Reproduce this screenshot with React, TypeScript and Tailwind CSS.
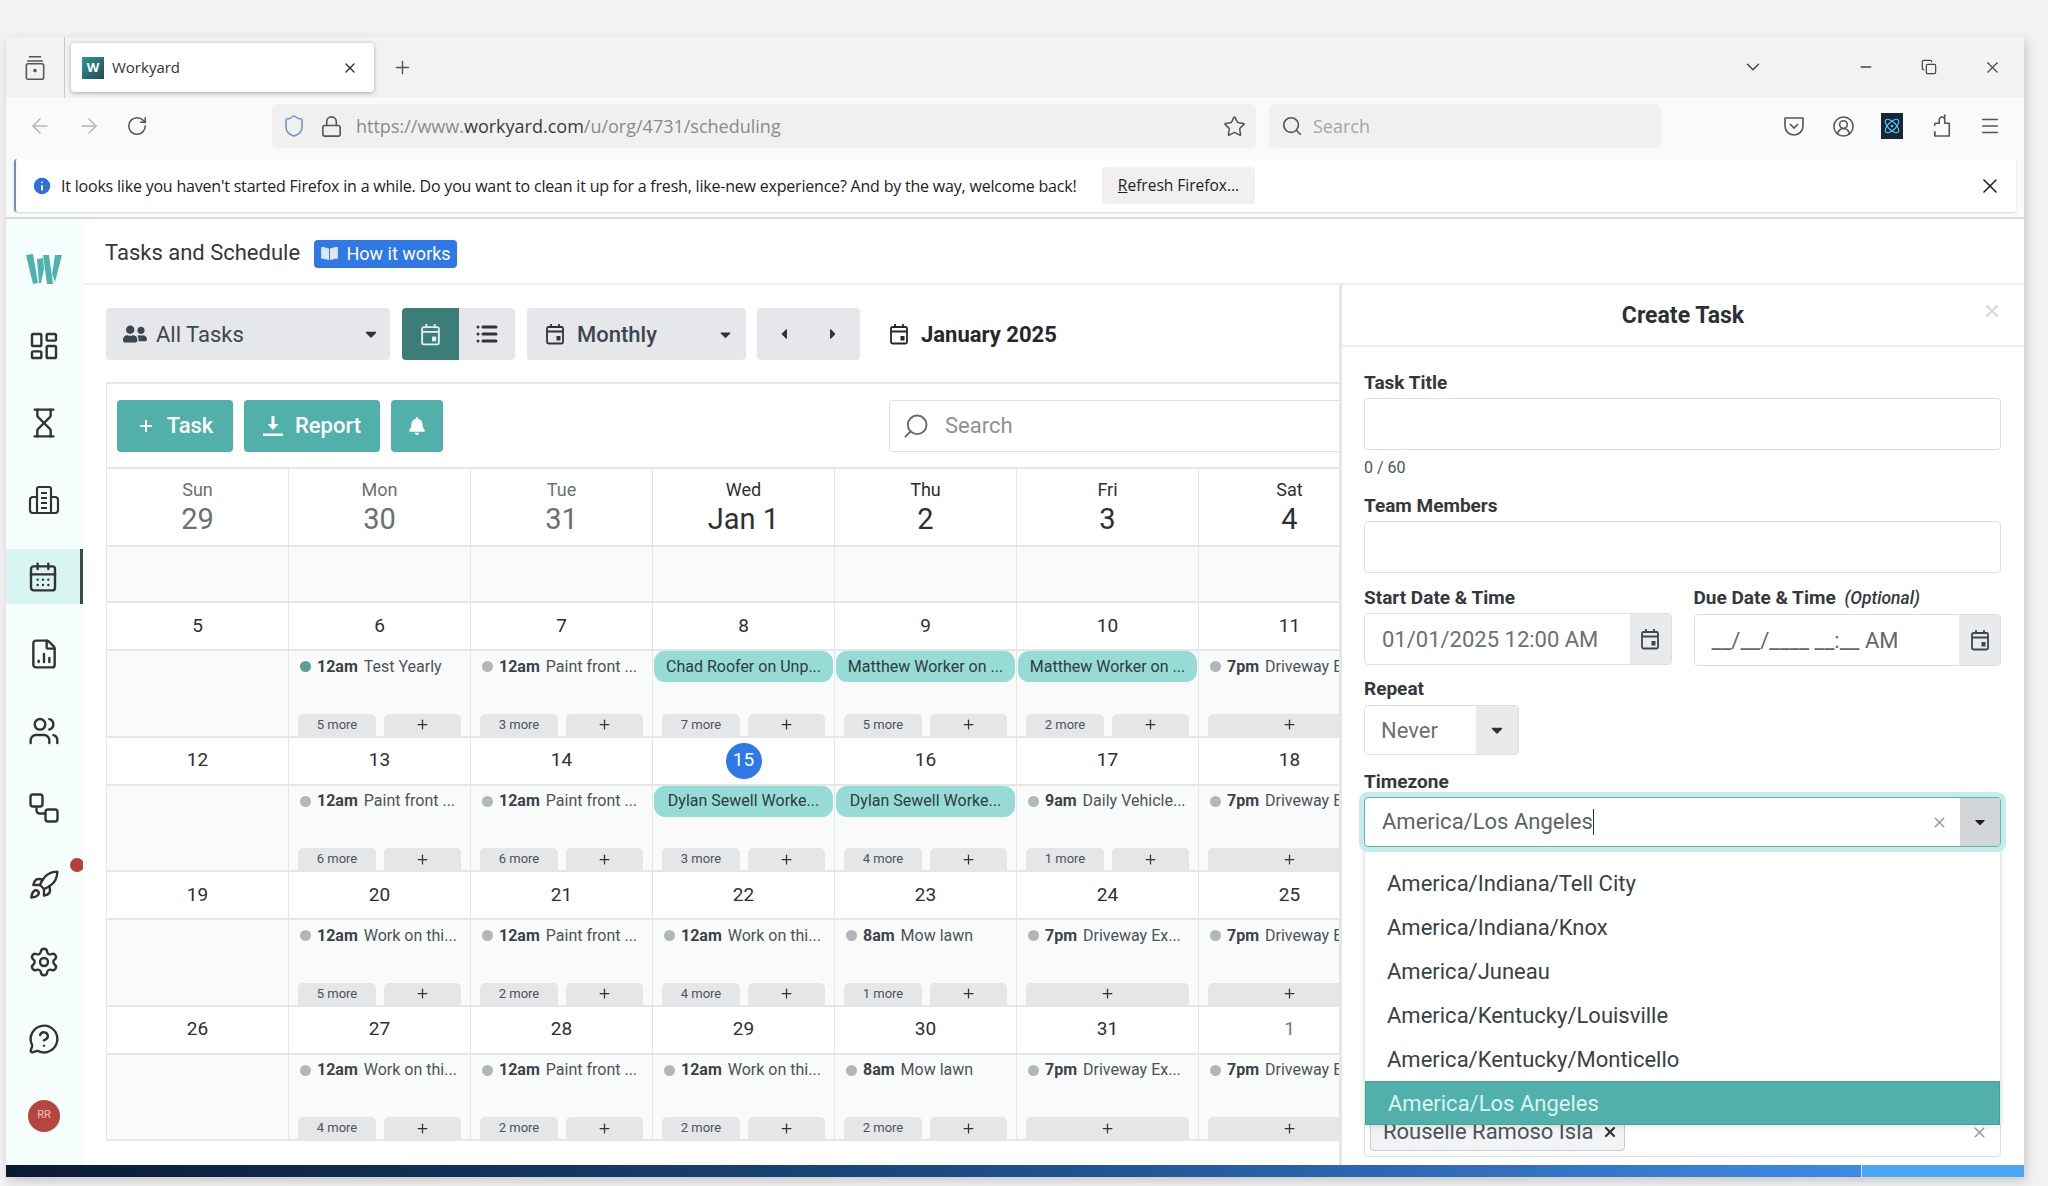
import {
  ArrowLeft,
  ArrowRight,
  Atom,
  ChevronDown,
  CircleUserRound,
  Copy,
  FileChartColumn,
  Hourglass,
  Info,
  LayoutDashboard,
  List,
  Lock,
  Menu,
  MessageCircleQuestion,
  Minus,
  Plus,
  RotateCw,
  Rocket,
  Search,
  Settings,
  Shield,
  Star,
  Users,
  X,
  CalendarDays,
} from "lucide-react";
import { FaBell, FaBookOpen, FaCaretDown, FaCaretLeft, FaCaretRight, FaUserFriends } from "react-icons/fa";

const ROBOTO = "font-['Roboto',sans-serif]";

type DayCell = {
  day: string;
  muted?: boolean;
  today?: boolean;
  time?: string;
  title?: string;
  chip?: string;
  dot?: string;
  more?: string;
};

const WEEKS: DayCell[][] = [
  [
    { day: "5" },
    { day: "6", time: "12am", title: "Test Yearly", dot: "bg-[#5f9c92]", more: "5 more" },
    { day: "7", time: "12am", title: "Paint front ...", more: "3 more" },
    { day: "8", chip: "Chad Roofer on Unp...", more: "7 more" },
    { day: "9", chip: "Matthew Worker on ...", more: "5 more" },
    { day: "10", chip: "Matthew Worker on ...", more: "2 more" },
    { day: "11", time: "7pm", title: "Driveway Ex..." },
  ],
  [
    { day: "12" },
    { day: "13", time: "12am", title: "Paint front ...", more: "6 more" },
    { day: "14", time: "12am", title: "Paint front ...", more: "6 more" },
    { day: "15", today: true, chip: "Dylan Sewell Worke...", more: "3 more" },
    { day: "16", chip: "Dylan Sewell Worke...", more: "4 more" },
    { day: "17", time: "9am", title: "Daily Vehicle...", more: "1 more" },
    { day: "18", time: "7pm", title: "Driveway Ex..." },
  ],
  [
    { day: "19" },
    { day: "20", time: "12am", title: "Work on thi...", more: "5 more" },
    { day: "21", time: "12am", title: "Paint front ...", more: "2 more" },
    { day: "22", time: "12am", title: "Work on thi...", more: "4 more" },
    { day: "23", time: "8am", title: "Mow lawn", more: "1 more" },
    { day: "24", time: "7pm", title: "Driveway Ex..." },
    { day: "25", time: "7pm", title: "Driveway Ex..." },
  ],
  [
    { day: "26" },
    { day: "27", time: "12am", title: "Work on thi...", more: "4 more" },
    { day: "28", time: "12am", title: "Paint front ...", more: "2 more" },
    { day: "29", time: "12am", title: "Work on thi...", more: "2 more" },
    { day: "30", time: "8am", title: "Mow lawn", more: "2 more" },
    { day: "31", time: "7pm", title: "Driveway Ex..." },
    { day: "1", muted: true, time: "7pm", title: "Driveway Ex..." },
  ],
];

const HEAD = [
  { name: "Sun", num: "29", dim: true },
  { name: "Mon", num: "30", dim: true },
  { name: "Tue", num: "31", dim: true },
  { name: "Wed", num: "Jan 1" },
  { name: "Thu", num: "2" },
  { name: "Fri", num: "3" },
  { name: "Sat", num: "4" },
];

const ZONES = [
  "America/Indiana/Tell City",
  "America/Indiana/Knox",
  "America/Juneau",
  "America/Kentucky/Louisville",
  "America/Kentucky/Monticello",
];

function CalIcon({ className }: { className: string }) {
  return (
    <svg viewBox="0 0 20 22" fill="none" stroke="currentColor" strokeWidth="1.8" className={className}>
      <rect x="2" y="4" width="16" height="16.5" rx="1.5" />
      <path d="M2 8.5h16M6 1v4M14 1v4" />
      <rect x="11.5" y="13" width="4" height="4.5" fill="currentColor" stroke="none" />
    </svg>
  );
}

function WLogo() {
  return (
    <svg viewBox="0 0 36 30" className="w-[36px] h-[30px]" fill="#4fb3ad">
      <path d="M0 1l7-1 5 29-5 1zM11 5l6-1 1 11-3 14-2 0zM17 1h6l4 29h-6zM29 1l7 0-7 27-3-8z" />
    </svg>
  );
}

function BuildingIcon() {
  return (
    <svg viewBox="0 0 32 32" fill="none" stroke="#333" strokeWidth="2.2" className="w-[32px] h-[32px]">
      <path d="M9 29V5a2 2 0 0 1 2-2h10a2 2 0 0 1 2 2v24" />
      <path d="M9 13H5a3 3 0 0 0-3 3v10a3 3 0 0 0 3 3h22a3 3 0 0 0 3-3V16a3 3 0 0 0-3-3h-4" />
      <path d="M13 9h6M13 14h6M13 19h6M13 24h6" />
    </svg>
  );
}

function NodesIcon() {
  return (
    <svg viewBox="0 0 30 30" fill="none" stroke="#333" strokeWidth="2.4" className="w-[30px] h-[30px]">
      <rect x="1.5" y="1.5" width="12" height="12" rx="2.5" />
      <rect x="16.5" y="16.5" width="12" height="12" rx="2.5" />
      <path d="M7.5 13.5v4a3 3 0 0 0 3 3h6" />
    </svg>
  );
}

function PocketIcon() {
  return (
    <svg viewBox="0 0 22 22" fill="none" stroke="#555" strokeWidth="1.6" className="w-[22px] h-[22px]">
      <path d="M2 3h18v8a9 9 0 0 1-18 0z" strokeLinejoin="round" />
      <path d="M7 9l4 4 4-4" />
    </svg>
  );
}

function PuzzleIcon() {
  return (
    <svg viewBox="0 0 22 26" fill="none" stroke="#555" strokeWidth="1.7" className="w-[20px] h-[24px]">
      <path d="M3 10h5V6a3 3 0 0 1 6 0v0l0 0V1h0v9h5v14H3v-5h0" strokeLinejoin="round" />
      <path d="M3 10v3M3 24v-5" />
    </svg>
  );
}

function SideItem({ children, active }: { children: React.ReactNode; active?: boolean }) {
  return (
    <div className="h-[77px] flex items-center shrink-0">
      <div
        className={`relative w-full h-[55px] flex items-center justify-center pr-[1px] ${
          active ? "bg-[#d9f5f1] border-r-[3px] border-[#3a4a4c]" : ""
        }`}
      >
        {children}
      </div>
    </div>
  );
}

function Sidebar() {
  const ic = "w-[32px] h-[32px] text-[#333]";
  return (
    <div className="w-[77px] shrink-0 bg-[#f6fdfd] pt-[11px] flex flex-col overflow-hidden">
      <SideItem><WLogo /></SideItem>
      <SideItem><LayoutDashboard className={ic} strokeWidth={1.8} /></SideItem>
      <SideItem><Hourglass className={ic} strokeWidth={1.8} /></SideItem>
      <SideItem><BuildingIcon /></SideItem>
      <SideItem active><CalendarDays className={ic} strokeWidth={1.8} /></SideItem>
      <SideItem><FileChartColumn className={ic} strokeWidth={1.8} /></SideItem>
      <SideItem><Users className={ic} strokeWidth={1.8} /></SideItem>
      <SideItem><NodesIcon /></SideItem>
      <SideItem>
        <Rocket className={ic} strokeWidth={1.8} />
        <span className="absolute top-[1px] right-[-1px] w-[14px] h-[14px] rounded-full bg-[#b5403c]" />
      </SideItem>
      <SideItem><Settings className={ic} strokeWidth={1.8} /></SideItem>
      <SideItem><MessageCircleQuestion className={ic} strokeWidth={1.8} /></SideItem>
      <SideItem>
        <span className="w-[32px] h-[32px] rounded-full bg-[#b5453f] text-[#eac9c5] text-[11px] flex items-center justify-center">
          RR
        </span>
      </SideItem>
    </div>
  );
}

function BrowserChrome() {
  return (
    <div className="font-['Open_Sans',sans-serif] shrink-0">
      <div className="h-[61px] bg-[#f1f2f3] flex items-start pt-[6px] relative">
        <div className="w-[59px] mt-[-6px] h-[61px] flex items-center justify-center border-r border-[#c9c9cb] shrink-0">
          <svg viewBox="0 0 24 30" fill="none" stroke="#555" strokeWidth="1.8" className="w-[22px] h-[26px]">
            <path d="M5 2h14M3 7h18" />
            <rect x="2" y="10" width="20" height="18" rx="2" />
            <circle cx="12" cy="18" r="1.2" fill="#555" />
          </svg>
        </div>
        <div className="ml-[6px] w-[303px] h-[49px] bg-white rounded-[4px] shadow-[0_1px_4px_rgba(0,0,0,0.3)] flex items-center pl-[11px] pr-[16px]">
          <span className="w-[22px] h-[22px] bg-gradient-to-br from-[#2f9a90] to-[#24465a] text-white text-[13px] font-bold flex items-center justify-center">
            W
          </span>
          <span className="ml-[8px] text-[15px] text-[#333]">Workyard</span>
          <X className="ml-auto w-[16px] h-[16px] text-[#333]" />
        </div>
        <Plus className="ml-[18px] mt-[14px] w-[21px] h-[21px] text-[#555]" strokeWidth={1.6} />
        <div className="ml-auto flex items-center mt-[13px] pr-[22px] text-[#444]">
          <ChevronDown className="w-[22px] h-[22px]" strokeWidth={1.6} />
          <Minus className="ml-[94px] w-[16px] h-[16px]" strokeWidth={2.4} />
          <Copy className="ml-[47px] w-[16px] h-[16px]" strokeWidth={1.8} />
          <X className="ml-[46px] w-[19px] h-[19px]" strokeWidth={1.4} />
        </div>
      </div>
      <div className="h-[60px] bg-[#f9fafa] flex items-center pb-[4px] text-[#777]">
        <ArrowLeft className="ml-[22px] w-[24px] h-[24px] text-[#b5b5b7]" strokeWidth={1.5} />
        <ArrowRight className="ml-[25px] w-[24px] h-[24px] text-[#b5b5b7]" strokeWidth={1.5} />
        <RotateCw className="ml-[25px] w-[22px] h-[22px] text-[#555]" strokeWidth={1.7} />
        <div className="ml-[124px] w-[984px] h-[44px] rounded-[5px] bg-[#f0f0f1] flex items-center pl-[10px] pr-[10px]">
          <Shield className="w-[24px] h-[24px] text-[#6d93bd]" strokeWidth={1.5} />
          <Lock className="ml-[14px] w-[23px] h-[23px] text-[#555]" strokeWidth={1.7} />
          <span className="ml-[13px] text-[18px] text-[#8a8a8c]">
            https://www.<span className="text-[#3a3a3c]">workyard.com</span>/u/org/4731/scheduling
          </span>
          <Star className="ml-auto w-[23px] h-[23px] text-[#555]" strokeWidth={1.6} />
        </div>
        <div className="ml-[13px] w-[392px] h-[44px] rounded-[5px] bg-[#f0f0f1] flex items-center pl-[12px]">
          <Search className="w-[22px] h-[22px] text-[#555]" strokeWidth={1.8} />
          <span className="ml-[10px] text-[18px] text-[#a5a5a7]">Search</span>
        </div>
        <div className="ml-[122px]"><PocketIcon /></div>
        <CircleUserRound className="ml-[27px] w-[23px] h-[23px] text-[#555]" strokeWidth={1.6} />
        <span className="ml-[26px] w-[22px] h-[26px] bg-[#16273a] flex items-center justify-center">
          <Atom className="w-[18px] h-[18px] text-[#5fc4ea]" strokeWidth={1.6} />
        </span>
        <span className="ml-[29px]"><PuzzleIcon /></span>
        <Menu className="ml-[27px] w-[22px] h-[22px] text-[#555]" strokeWidth={1.6} />
      </div>
      <div className="h-[61px] bg-[#f9fafa] border-b-2 border-[#d9d9db] px-[8px] pt-[1px]">
        <div className="h-[53px] bg-white rounded-[3px] border-l-2 border-l-[#6d93bd] shadow-[0_1px_2px_rgba(0,0,0,0.15)] flex items-center">
          <Info className="ml-[15px] w-[22px] h-[22px] text-white fill-[#2f6fd6] shrink-0" strokeWidth={2} />
          <span className="ml-[8px] text-[16px] leading-none tracking-[-0.2px] text-[#222] whitespace-nowrap w-[1040px] shrink-0">
            It looks like you haven't started Firefox in a while. Do you want to clean it up for a fresh, like-new experience? And by the way, welcome back!
          </span>
          <span className="ml-[1px] w-[153px] h-[37px] rounded-[4px] bg-[#f0f0f1] text-[15.500px] text-[#222] flex items-center justify-center">
            <span><span className="underline">R</span>efresh Firefox...</span>
          </span>
          <X className="ml-auto mr-[14px] w-[24px] h-[24px] text-[#222]" strokeWidth={1.6} />
        </div>
      </div>
    </div>
  );
}

function GrayBtn({ children, className }: { children: React.ReactNode; className: string }) {
  return (
    <div className={`h-[52px] bg-[#e5e7ea] rounded-[4px] flex items-center text-[#3d4650] ${className}`}>{children}</div>
  );
}

function CalendarCell({ cell }: { cell: DayCell }) {
  const hasBody = cell.time || cell.chip;
  return (
    <div className="h-[84.500px] border-r border-[#e4e6e8] bg-[#f9fafa] relative overflow-hidden">
      {cell.chip && (
        <div className="mx-[1px] h-[31px] rounded-[11px] bg-[#97dbd6] text-[#2f3b40] text-[16px] flex items-center justify-center whitespace-nowrap">
          {cell.chip}
        </div>
      )}
      {cell.time && (
        <div className="h-[31px] pl-[11px] flex items-center text-[16px] whitespace-nowrap text-[#4b5358]">
          <span className={`w-[11px] h-[11px] rounded-full shrink-0 ${cell.dot ?? "bg-[#b1b6ba]"}`} />
          <b className="ml-[6px] font-bold text-[#3b4247]">{cell.time}</b>
          <span className="ml-[6px]">{cell.title}</span>
        </div>
      )}
      {hasBody && (
        <div className="absolute bottom-0 left-[9px] right-[9px] flex gap-[8px]">
          {cell.more && (
            <span className="w-[78px] h-[22px] bg-[#e4e6e8] rounded-t-[5px] text-[13px] text-[#4b5358] flex items-center justify-center">
              {cell.more}
            </span>
          )}
          <span className="flex-1 h-[22px] bg-[#e4e6e8] rounded-t-[5px] flex items-center justify-center">
            <Plus className="w-[15px] h-[15px] text-[#333]" strokeWidth={2} />
          </span>
        </div>
      )}
    </div>
  );
}

function Calendar() {
  return (
    <div className="w-[1234px] border-l border-t-2 border-[#e4e6e8] bg-white overflow-hidden">
      <div className="h-[85px] flex items-center pl-[10px] gap-[11px] border-b-2 border-[#e4e6e8] text-white text-[22px] font-medium">
        <div className="w-[116px] shrink-0 h-[52px] rounded-[4px] bg-[#52b0aa] flex items-center justify-center gap-[12px]">
          <Plus className="w-[18px] h-[18px]" strokeWidth={2.6} />
          Task
        </div>
        <div className="w-[136px] shrink-0 h-[52px] rounded-[4px] bg-[#52b0aa] flex items-center justify-center gap-[12px]">
          <svg viewBox="0 0 20 22" fill="white" className="w-[20px] h-[22px]">
            <path d="M8.5 1h3v8h4l-5.500 6-5.500-6h4zM0 18.500h20v2.500h-20z" />
          </svg>
          Report
        </div>
        <div className="w-[52px] shrink-0 h-[52px] rounded-[4px] bg-[#52b0aa] flex items-center justify-center">
          <FaBell className="w-[18px] h-[18px]" />
        </div>
        <div className="ml-[435px] w-[470px] shrink-0 h-[52px] rounded-l-[4px] border border-[#dcdee0] flex items-center pl-[12px]">
          <Search className="w-[28px] h-[28px] text-[#666] -scale-x-100" strokeWidth={1.6} />
          <span className="ml-[15px] text-[#8b9197] font-normal">Search</span>
        </div>
      </div>
      <div className="grid grid-cols-[repeat(7,182px)]">
        {HEAD.map((h) => (
          <div
            key={h.name}
            className={`h-[78px] border-r border-b-2 border-[#e4e6e8] flex flex-col items-center justify-center ${
              h.dim ? "text-[#6a7075]" : "text-[#2b3034]"
            }`}
          >
            <span className="text-[18px] leading-[24px]">{h.name}</span>
            <span className="text-[29px] leading-[34px]">{h.num}</span>
          </div>
        ))}
        {HEAD.map((h) => (
          <div key={h.name} className="h-[56px] border-r border-b-2 border-[#e4e6e8] bg-[#f9fafa]" />
        ))}
        {WEEKS.map((week) => (
          <div key={week[0].day} className="contents">
            {week.map((c) => (
              <div key={c.day} className="h-[48px] border-r border-b-2 border-[#e4e6e8] flex items-center justify-center text-[19px] text-[#2b3034]">
                {c.today ? (
                  <span className="w-[36px] h-[36px] rounded-full bg-[#2f79e6] text-white flex items-center justify-center">
                    {c.day}
                  </span>
                ) : (
                  <span className={c.muted ? "text-[#777]" : ""}>{c.day}</span>
                )}
              </div>
            ))}
            {week.map((c) => (
              <div key={c.day} className="border-b-2 border-[#e4e6e8]">
                <CalendarCell cell={c} />
              </div>
            ))}
          </div>
        ))}
      </div>
    </div>
  );
}

function Label({ children }: { children: React.ReactNode }) {
  return <div className="text-[19px] leading-[21px] font-bold text-[#33383c]">{children}</div>;
}

function Field({ className }: { className: string }) {
  return <div className={`h-[52px] rounded-[4px] border border-[#dcdee0] bg-white ${className}`} />;
}

function DateField({ value, muted }: { value: string; muted?: boolean }) {
  return (
    <div className="mt-[5px] h-[52px] rounded-[4px] border border-[#dcdee0] bg-white flex items-center overflow-hidden">
      <span className={`pl-[17px] text-[22px] whitespace-nowrap ${muted ? "text-[#666]" : "text-[#6a7075]"}`}>{value}</span>
      <span className="ml-auto w-[41px] h-full bg-[#e8eaec] flex items-center justify-center">
        <CalIcon className="w-[20px] h-[22px] text-[#3d4650]" />
      </span>
    </div>
  );
}

function TaskPanel() {
  return (
    <div className="w-[685px] shrink-0 border-l-[3px] border-[#e4e6e8] bg-white relative overflow-hidden">
      <div className="h-[62px] border-b-2 border-[#eceeef] flex items-center justify-center pt-[3px] text-[23px] font-bold text-[#2b3034] relative">
        Create Task
        <X className="absolute right-[22px] top-[16px] w-[20px] h-[20px] text-[#d5d7d9]" strokeWidth={2.4} />
      </div>
      <div className="pl-[22px] pr-[23px] pt-[25px] relative">
        <Label>Task Title</Label>
        <Field className="mt-[5px]" />
        <div className="mt-[8px] text-[16px] leading-[20px] text-[#4b5358]">0 / 60</div>
        <div className="mt-[17px]"><Label>Team Members</Label></div>
        <Field className="mt-[5px]" />
        <div className="mt-[14px] grid grid-cols-2 gap-[22px]">
          <div>
            <Label>Start Date &amp; Time</Label>
            <DateField value="01/01/2025 12:00 AM" />
          </div>
          <div>
            <Label>
              Due Date &amp; Time <i className="ml-[4px] text-[17.500px] font-medium">(Optional)</i>
            </Label>
            <DateField value="__/__/____ __:__ AM" muted />
          </div>
        </div>
        <div className="mt-[12px]"><Label>Repeat</Label></div>
        <div className="mt-[6px] w-[155px] h-[50px] rounded-[4px] border border-[#dcdee0] flex items-center overflow-hidden">
          <span className="pl-[16px] text-[22px] text-[#6a7075]">Never</span>
          <span className="ml-auto w-[42px] h-full bg-[#e8eaec] flex items-center justify-center">
            <FaCaretDown className="w-[18px] h-[18px] text-[#333]" />
          </span>
        </div>
        <div className="mt-[16px]"><Label>Timezone</Label></div>
        <div className="mt-[5px] relative z-10 h-[50px] rounded-[4px] border border-[#5db7b1] ring-[5px] ring-[#c5ecea] bg-white flex items-center overflow-hidden">
          <span className="pl-[17px] text-[22px] text-[#5d6469] border-r border-[#333] leading-[26px]">America/Los Angeles</span>
          <X className="ml-auto mr-[12px] w-[17px] h-[17px] text-[#9a9ea2]" strokeWidth={2.2} />
          <span className="w-[40px] h-full bg-[#d3d6d9] flex items-center justify-center">
            <FaCaretDown className="w-[16px] h-[16px] text-[#222]" />
          </span>
        </div>
        <div className="mt-[258px] h-[52px] rounded-[4px] border border-[#dcdee0] flex items-end pb-[5px] pl-[5px] relative">
          <span className="w-[255px] h-[46px] rounded-[4px] border border-[#c8cacc] bg-[#f2f3f4] text-[22px] leading-[52px] text-[#4b5358] flex items-start pl-[12px] whitespace-nowrap">
            Rouselle Ramoso Isla
            <X className="ml-[9px] mt-[18px] w-[16px] h-[16px] text-[#333]" strokeWidth={3.4} />
          </span>
          <X className="absolute right-[12px] bottom-[15px] w-[17px] h-[17px] text-[#9a9ea2]" strokeWidth={2.2} />
        </div>
        <div className="absolute z-[5] left-[22px] right-[23px] top-[500px] h-[277px] bg-white border-x border-[#e4e6e8] shadow-[0_2px_6px_rgba(0,0,0,0.12)] pt-[14px]">
          {ZONES.map((z) => (
            <div key={z} className="h-[44px] flex items-center pl-[22px] text-[22px] text-[#3a4045]">
              {z}
            </div>
          ))}
          <div className="h-[44px] bg-[#52b0aa] border border-[#46a09a] flex items-center pl-[22px] text-[22px] text-[#d6f5f3]">
            America/Los Angeles
          </div>
        </div>
      </div>
    </div>
  );
}

export default function App() {
  return (
    <div className="w-[2048px] h-[1186px] bg-[#f2f2f3] pt-[37px] pl-[6px] overflow-hidden">
      <div className={`w-[2018px] h-[1140px] flex flex-col shadow-[2px_4px_10px_rgba(0,0,0,0.18)] ${ROBOTO}`}>
        <BrowserChrome />
        <div className="flex-1 flex min-h-0 bg-white">
          <Sidebar />
          <div className="flex-1 flex flex-col min-w-0">
            <div className="h-[66px] shrink-0 border-b-2 border-[#eceeef] flex items-center pl-[22px] pt-[2px]">
              <span className="text-[22px] text-[#33383c]">Tasks and Schedule</span>
              <span className="ml-[14px] mt-[3px] w-[143px] h-[28px] rounded-[4px] bg-[#2f79e6] text-white text-[18px] flex items-center justify-center gap-[9px]">
                <FaBookOpen className="w-[17px] h-[15px] text-[#dbe6f8]" />
                How it works
              </span>
            </div>
            <div className="flex-1 flex min-h-0">
              <div className="flex-1 min-w-0 pl-[23px] overflow-hidden">
                <div className="h-[97px] pt-[23px] flex items-start">
                  <GrayBtn className="w-[284px] pl-[17px] pr-[10px] text-[22px]">
                    <FaUserFriends className="w-[24px] h-[20px]" />
                    <span className="ml-[9px]">All Tasks</span>
                    <FaCaretDown className="ml-auto w-[18px] h-[18px] text-[#333]" />
                  </GrayBtn>
                  <span className="ml-[12px] w-[57px] h-[52px] rounded-l-[4px] bg-[#3d7d78] flex items-center justify-center">
                    <CalIcon className="w-[21px] h-[23px] text-[#dff1ef]" />
                  </span>
                  <GrayBtn className="w-[56px] rounded-l-none justify-center">
                    <List className="w-[24px] h-[24px] text-[#333]" strokeWidth={3} />
                  </GrayBtn>
                  <GrayBtn className="ml-[12px] w-[219px] pl-[18px] pr-[12px] text-[22px] font-medium">
                    <CalIcon className="w-[20px] h-[22px] text-[#333]" />
                    <span className="ml-[12px]">Monthly</span>
                    <FaCaretDown className="ml-auto w-[17px] h-[17px] text-[#333]" />
                  </GrayBtn>
                  <GrayBtn className="ml-[11px] w-[103px] justify-center gap-[33px]">
                    <FaCaretLeft className="w-[16px] h-[16px] text-[#333]" />
                    <FaCaretRight className="w-[16px] h-[16px] text-[#333]" />
                  </GrayBtn>
                  <div className="ml-[29px] h-[52px] flex items-center text-[22px] font-bold text-[#23282c]">
                    <CalIcon className="w-[20px] h-[22px] text-[#23282c]" />
                    <span className="ml-[12px]">January 2025</span>
                  </div>
                </div>
                <Calendar />
              </div>
              <TaskPanel />
            </div>
          </div>
        </div>
        <div className="h-[12px] shrink-0 flex">
          <div className="flex-1 bg-gradient-to-r from-[#0a1a33] via-[#1a4a82] to-[#3f8ae6]" />
          <div className="w-[1px] bg-[#cfe4f8]" />
          <div className="w-[162px] bg-[#4ba6f5]" />
        </div>
      </div>
    </div>
  );
}
